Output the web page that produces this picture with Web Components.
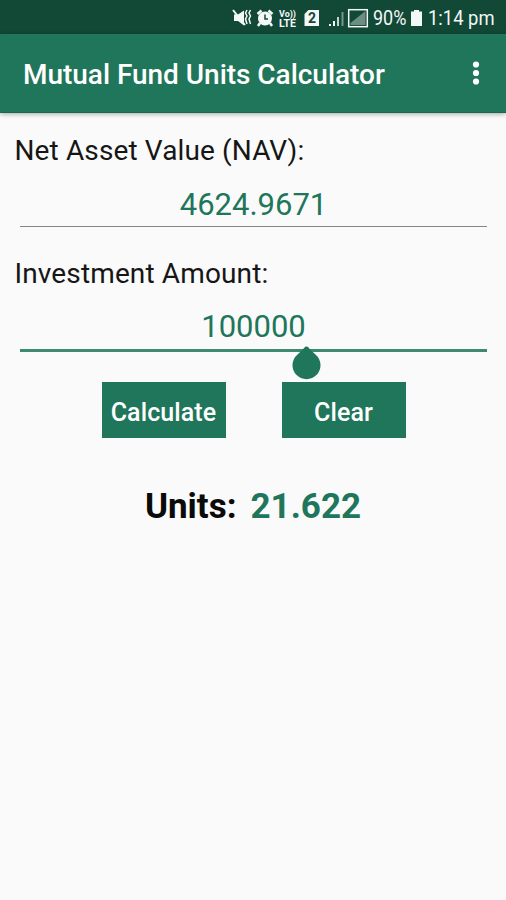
<!DOCTYPE html>
<html lang="en">
<head>
<meta charset="utf-8">
<title>Mutual Fund Units Calculator</title>
<style>
    :root {
        --primary: #20765a;
        --primary-dark: #124836;
        --surface: #fafafa;
    }
    body {
        margin: 0;
        height: 900px;
        overflow: hidden;
        background: var(--surface);
        font-family: Roboto, sans-serif;
    }
</style>
</head>
<body>
<fund-calculator></fund-calculator>

<script>
class StatusBar extends HTMLElement {
    _template = `
        <style>
            :host {
                display: flex;
                align-items: center;
                box-sizing: border-box;
                height: 34px;
                padding: 1px 0 0 232px;
                background: var(--primary-dark);
                color: #f4f8f6;
            }
            svg { display: block; flex: none; margin-top: 1px; }
            .text {
                font-size: 20px;
                line-height: 34px;
                white-space: nowrap;
                transform-origin: 0 50%;
            }
            .percent { width: 35px; margin-top: 1px; transform: scaleX(.9); }
            .time { width: 70px; margin-top: 1px; transform: scaleX(.92); }
            .battery { margin-right: 4px; }
        </style>
        <svg width="141" height="24" viewBox="0 0 141 24" fill="currentColor">
            <path d="M2 8.500h4l6-4v15l-6-4.500H2z"/>
            <path d="M1 4l12 15" stroke="currentColor" stroke-width="2"/>
            <path d="M15 4l-1.500 3 1.500 3-1.500 3 1.500 5M18.500 4L17 7l1.500 3-1.500 3 1.500 5" fill="none" stroke="currentColor" stroke-width="1.500"/>
            <circle cx="33" cy="12.500" r="7"/>
            <path d="M25.500 8l4-3.500M40.500 8l-4-3.500M28 17l-2 3M38 17l2 3" stroke="currentColor" stroke-width="2.500"/>
            <path d="M33 8.500v4.500h3" fill="none" stroke="#124836" stroke-width="1.500"/>
            <g font-family="Roboto, sans-serif" font-weight="700">
                <text x="47" y="10.500" font-size="9" textLength="17" lengthAdjust="spacingAndGlyphs">Vo))</text>
                <text x="47" y="20.500" font-size="11" textLength="17" lengthAdjust="spacingAndGlyphs">LTE</text>
            </g>
            <path d="M76.500 4H87v16H72.500V8z"/>
            <text x="79.900" y="17" text-anchor="middle" font-family="Roboto, sans-serif" font-weight="700" font-size="14" fill="#124836">2</text>
            <path d="M97 18h2v2h-2zM101 15h2v5h-2z"/>
            <path d="M105 11h2v9h-2z" opacity=".8"/>
            <path d="M109.500 6h2v14h-2z" opacity=".45"/>
            <path d="M118.500 19V17l15-12v14z" opacity=".4"/>
            <rect x="116.700" y="3.700" width="18.600" height="17" fill="none" stroke="currentColor" stroke-width="1.500"/>
        </svg>
        <span class="text percent">90%</span>
        <svg class="battery" width="16" height="24" viewBox="0 0 16 24" fill="currentColor">
            <path d="M6 4h5v1.500h3V20H3V5.500h3z"/>
        </svg>
        <span class="text time">1:14 pm</span>
    `;

    constructor() {
        super();
        this.attachShadow({ mode: 'open' }).innerHTML = this._template;
    }
}

class AppBar extends HTMLElement {
    _template = `
        <style>
            :host {
                display: flex;
                align-items: center;
                justify-content: space-between;
                box-sizing: border-box;
                height: 79px;
                padding: 0 24px 0 23px;
                background: var(--primary);
                color: #fff;
                border-bottom: 1px solid #1b674e;
                box-shadow: 0 1px 5px rgba(0, 0, 0, .35);
            }
            h1 {
                margin: 4px 0 0;
                font-size: 28px;
                font-weight: 500;
                line-height: 34px;
                letter-spacing: -.03px;
                white-space: nowrap;
            }
            svg { display: block; }
        </style>
        <h1><slot></slot></h1>
        <svg width="12" height="28" viewBox="0 0 12 28" fill="currentColor">
            <circle cx="6" cy="5.500" r="3.100"/>
            <circle cx="6" cy="14" r="3.100"/>
            <circle cx="6" cy="22.500" r="3.100"/>
        </svg>
    `;

    constructor() {
        super();
        this.attachShadow({ mode: 'open' }).innerHTML = this._template;
    }
}

class NumberField extends HTMLElement {
    _template = `
        <style>
            :host { display: block; height: 123px; }
            .label {
                padding-left: 14.500px;
                height: 36px;
                font-size: 28px;
                line-height: 36px;
                letter-spacing: .13px;
                color: #161616;
                white-space: nowrap;
            }
            .value {
                position: relative;
                box-sizing: border-box;
                height: 58px;
                margin: 0 19px 0 20px;
                padding-top: 18px;
                font-size: 31px;
                line-height: 36px;
                text-align: center;
                color: var(--primary);
                border-bottom: 1px solid #858585;
            }
            :host([focused]) .value {
                height: 60px;
                padding-top: 17px;
                border-bottom: 3px solid #3d8a70;
            }
            .handle {
                display: none;
                position: absolute;
                left: 272px;
                top: 54px;
            }
            :host([focused]) .handle { display: block; }
        </style>
        <div class="label"><slot name="label"></slot></div>
        <div class="value">
            <slot></slot>
            <svg class="handle" width="29" height="34" viewBox="0 0 29 34" fill="#20765a">
                <path d="M14.500 .5C16.500 .5 17 3 23.500 8.500A14 14 0 1 1 5.500 8.500C12 3 12.500 .5 14.500 .5z"/>
            </svg>
        </div>
    `;

    constructor() {
        super();
        this.attachShadow({ mode: 'open' }).innerHTML = this._template;
    }
}

class ActionButton extends HTMLElement {
    _template = `
        <style>
            :host { display: block; width: 124px; height: 56px; }
            button {
                width: 100%;
                height: 100%;
                padding: 4px 0 0;
                border: 0;
                background: var(--primary);
                color: #fff;
                font: 500 25px Roboto, sans-serif;
                letter-spacing: .1px;
            }
        </style>
        <button type="button"><slot></slot></button>
    `;

    constructor() {
        super();
        this.attachShadow({ mode: 'open' }).innerHTML = this._template;
    }
}

class FundCalculator extends HTMLElement {
    _template = `
        <style>
            :host { display: block; }
            main { padding-top: 20px; }
            .actions {
                display: flex;
                justify-content: center;
                gap: 56px;
                padding: 3px 0 0 1px;
            }
            .result {
                display: flex;
                justify-content: center;
                gap: 14px;
                margin-top: 48px;
                font-size: 35px;
                font-weight: 700;
                line-height: 42px;
                color: #0a0a0a;
            }
            .units { color: var(--primary); }
        </style>
        <status-bar></status-bar>
        <app-bar>Mutual Fund Units Calculator</app-bar>
        <main>
            <number-field><span slot="label">Net Asset Value (NAV):</span>4624.9671</number-field>
            <number-field focused><span slot="label">Investment Amount:</span>100000</number-field>
            <div class="actions">
                <action-button>Calculate</action-button>
                <action-button>Clear</action-button>
            </div>
            <div class="result">
                <span>Units:</span>
                <span class="units">21.622</span>
            </div>
        </main>
    `;

    constructor() {
        super();
        this.attachShadow({ mode: 'open' }).innerHTML = this._template;
    }
}

window.customElements.define('status-bar', StatusBar);
window.customElements.define('app-bar', AppBar);
window.customElements.define('number-field', NumberField);
window.customElements.define('action-button', ActionButton);
window.customElements.define('fund-calculator', FundCalculator);
</script>
</body>
</html>
